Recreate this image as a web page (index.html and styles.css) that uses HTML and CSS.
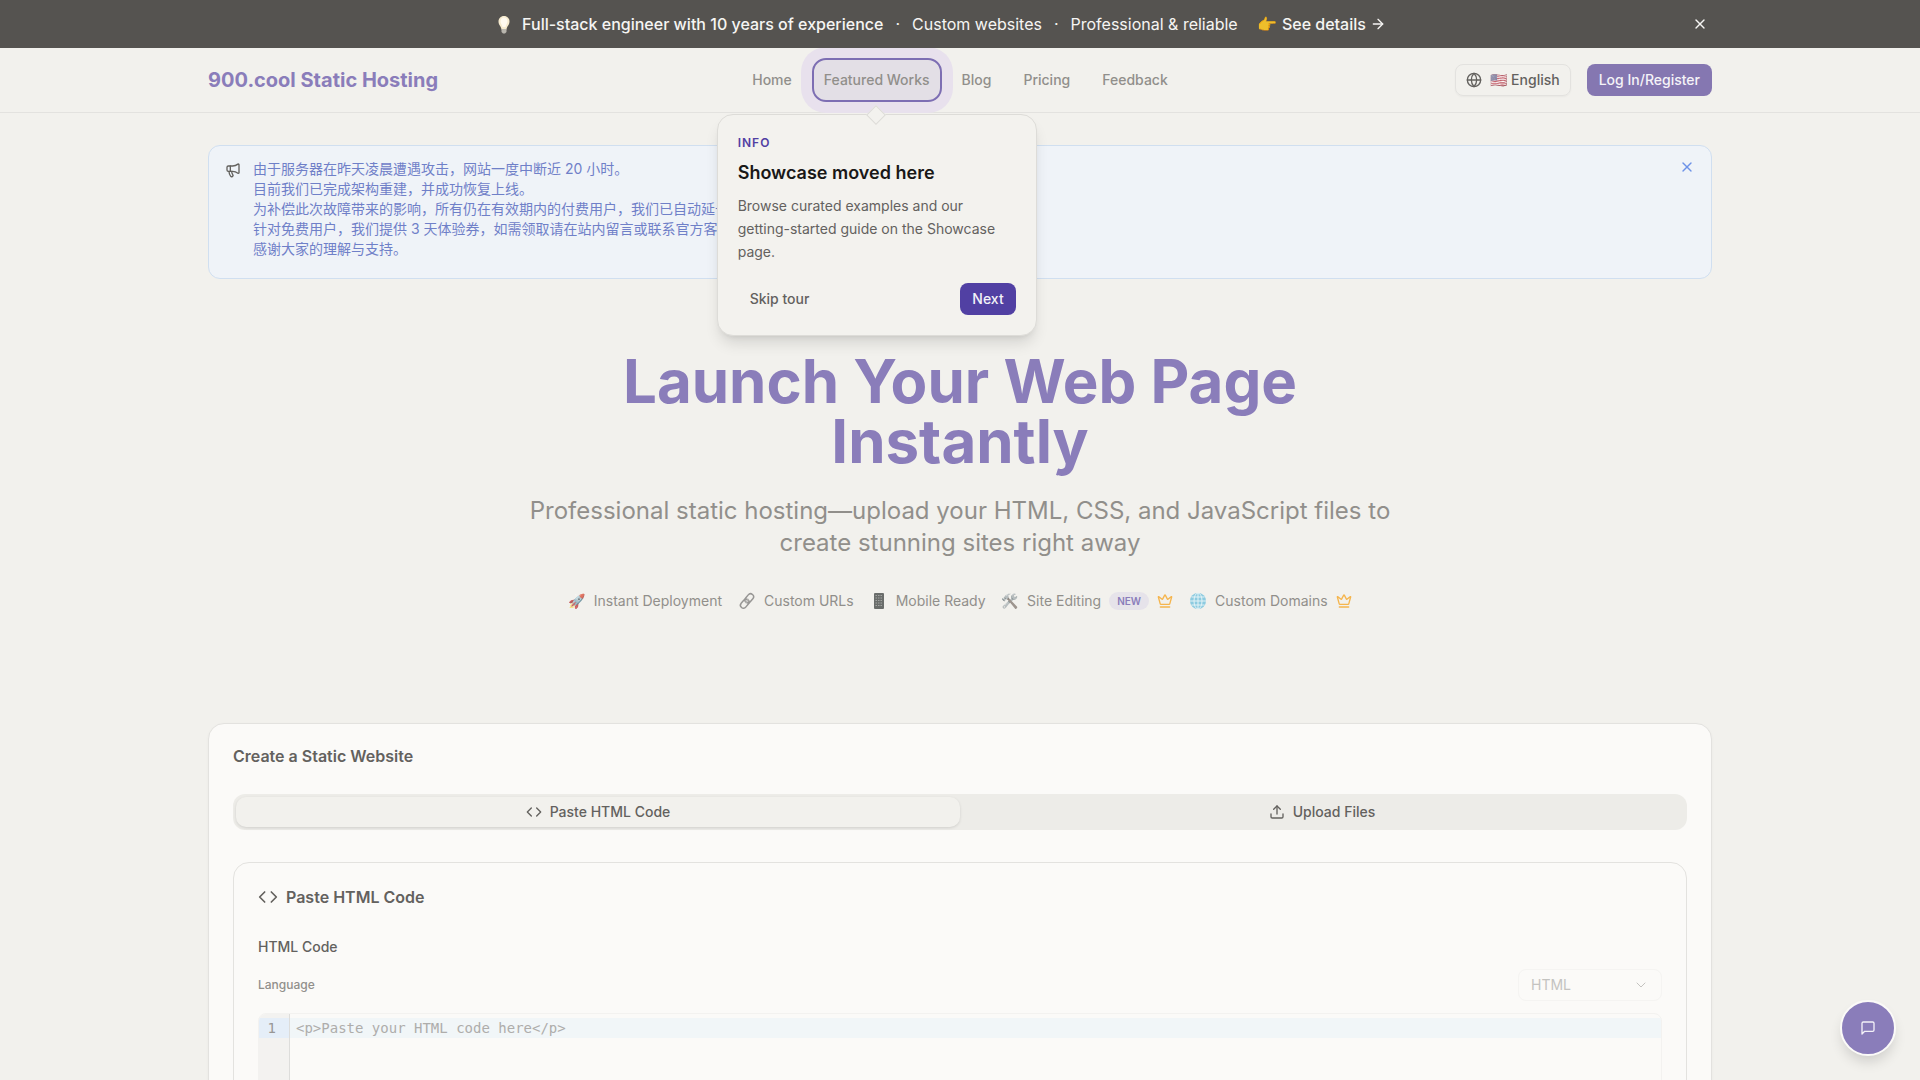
FILE: index.html
```html
<!DOCTYPE html>
<html lang="en">
<head>
  <meta charset="UTF-8" />
  <meta name="viewport" content="width=device-width, initial-scale=1.0" />
  <title>900.cool Static Hosting</title>
  <link rel="stylesheet" href="styles.css">
</head>
<body>
  <!-- Promo bar -->
  <div class="promo">
    <div class="container promo-inner">
      <p class="promo-text">
        <svg class="bulb" viewBox="0 0 20 24">
          <path d="M10 4c3.400 0 5.500 2.500 5.500 5.500 0 3.500-2.500 4.500-3 8h-5c-.500-3.500-3-4.500-3-8C4.500 6.500 6.600 4 10 4z" fill="#f6ebcf"/>
          <path d="M10 5.500c2 0 3.500 1.700 3.500 3.800 0 2.200-1.500 3.200-2 5.700h-3c-.500-2.500-2-3.500-2-5.700 0-2.100 1.500-3.800 3.500-3.800z" fill="#fffaf0"/>
          <path d="M7.500 17h5v3l-1.500 1.500H9L7.500 20z" fill="#b9b6ae"/>
        </svg>
        <strong>Full-stack engineer with 10 years of experience</strong>
        <span>·</span>
        <span>Custom websites</span>
        <span>·</span>
        <span>Professional &amp; reliable</span>
        <a class="promo-link" href="#"><span><span class="hand">👉</span> See details</span>
          <svg class="icon-sm" viewBox="0 0 24 24"><path d="M5 12h14"/><path d="m12 5 7 7-7 7"/></svg>
        </a>
      </p>
      <button class="promo-close" aria-label="Close">
        <svg class="icon" viewBox="0 0 24 24"><path d="M18 6 6 18"/><path d="m6 6 12 12"/></svg>
      </button>
    </div>
  </div>

  <!-- Header -->
  <header class="header">
    <div class="container header-inner">
      <a class="logo" href="#">900.cool Static Hosting</a>
      <nav class="nav">
        <a href="#">Home</a>
        <div class="nav-target">
          <a href="#">Featured Works</a>
          <div class="tour" role="dialog" aria-labelledby="tourTitle">
            <div class="tour-label">INFO</div>
            <h2 id="tourTitle">Showcase moved here</h2>
            <p>Browse curated examples and our getting-started guide on the Showcase page.</p>
            <div class="tour-actions">
              <button class="btn btn-ghost">Skip tour</button>
              <button class="btn btn-solid">Next</button>
            </div>
          </div>
        </div>
        <a href="#">Blog</a>
        <a href="#">Pricing</a>
        <a href="#">Feedback</a>
      </nav>
      <div class="header-actions">
        <button class="btn btn-outline">
          <svg class="icon" viewBox="0 0 24 24"><circle cx="12" cy="12" r="10"/><path d="M12 2a14.5 14.5 0 0 0 0 20 14.5 14.5 0 0 0 0-20"/><path d="M2 12h20"/></svg>
          <span><span class="faded">🇺🇸</span> English</span>
        </button>
        <button class="btn btn-primary">Log In/Register</button>
      </div>
    </div>
  </header>

  <main class="container">
    <!-- Notice -->
    <section class="notice" lang="zh-CN">
      <svg class="icon" viewBox="0 0 24 24"><path d="M11 6a13 13 0 0 0 8.400-2.800A1 1 0 0 1 21 4v12a1 1 0 0 1-1.600.8A13 13 0 0 0 11 14H5a2 2 0 0 1-2-2V8a2 2 0 0 1 2-2z"/><path d="M6 14a12 12 0 0 0 2.400 7.200 2 2 0 0 0 3.200-2.400A8 8 0 0 1 10 14"/><path d="M8 6v8"/></svg>
      <div class="notice-text">
        由于服务器在昨天凌晨遭遇攻击，网站一度中断近 20 小时。<br>
        目前我们已完成架构重建，并成功恢复上线。<br>
        为补偿此次故障带来的影响，所有仍在有效期内的付费用户，我们已自动延长服务时间。<br>
        针对免费用户，我们提供 3 天体验券，如需领取请在站内留言或联系官方客服。<br>
        感谢大家的理解与支持。
      </div>
      <button class="notice-close" aria-label="关闭">
        <svg class="icon" viewBox="0 0 24 24"><path d="M18 6 6 18"/><path d="m6 6 12 12"/></svg>
      </button>
    </section>

    <!-- Hero -->
    <section class="hero">
      <h1>Launch Your Web Page Instantly</h1>
      <p>Professional static hosting—upload your HTML, CSS, and JavaScript files to create stunning sites right away</p>
      <ul class="features">
        <li><span class="faded">🚀</span> Instant Deployment</li>
        <li>
          <svg class="pic" viewBox="0 0 18 18" fill="none">
            <g transform="rotate(-50 9 9)" stroke="#979694" stroke-width="1.500">
              <rect x="0.500" y="6" width="10" height="6" rx="3"/>
              <rect x="7.500" y="6" width="10" height="6" rx="3"/>
              <path d="M6.500 9h5" stroke="#b9b8b6"/>
            </g>
          </svg>
          Custom URLs
        </li>
        <li>
          <svg class="pic" viewBox="0 0 18 18">
            <rect x="4" y="1" width="10" height="16" rx="1" fill="#6a6d6b"/>
            <path d="M5.500 3.500h7M5.500 6h7M5.500 8.500h7M5.500 11h7M5.500 13.500h7" stroke="#a3a5a3" stroke-dasharray="1.500 1"/>
          </svg>
          Mobile Ready
        </li>
        <li><span class="faded gray">🛠️</span> Site Editing <span class="badge">NEW</span>
          <svg class="icon crown" viewBox="0 0 24 24"><path d="M11.562 3.266a.5.5 0 0 1 .876 0L15.390 8.870a1 1 0 0 0 1.516.294L21.183 5.500a.5.5 0 0 1 .798.519l-2.834 10.246a1 1 0 0 1-.956.734H5.810a1 1 0 0 1-.957-.734L2.020 6.020a.5.5 0 0 1 .798-.519l4.276 3.664a1 1 0 0 0 1.516-.294z"/><path d="M5 21h14"/></svg>
        </li>
        <li>
          <svg class="pic" viewBox="0 0 18 18">
            <circle cx="9" cy="9" r="8" fill="#8ccbe0"/>
            <g fill="none" stroke="#e4f3f6">
              <ellipse cx="9" cy="9" rx="4" ry="8"/>
              <path d="M9 1v16M1 9h16M2.500 5h13M2.500 13h13"/>
            </g>
          </svg>
          Custom Domains
          <svg class="icon crown" viewBox="0 0 24 24"><path d="M11.562 3.266a.5.5 0 0 1 .876 0L15.390 8.870a1 1 0 0 0 1.516.294L21.183 5.500a.5.5 0 0 1 .798.519l-2.834 10.246a1 1 0 0 1-.956.734H5.810a1 1 0 0 1-.957-.734L2.020 6.020a.5.5 0 0 1 .798-.519l4.276 3.664a1 1 0 0 0 1.516-.294z"/><path d="M5 21h14"/></svg>
        </li>
      </ul>
    </section>

    <!-- Create site -->
    <section class="card">
      <h2 class="card-title">Create a Static Website</h2>
      <div class="tabs" role="tablist">
        <button class="tab active" role="tab" aria-selected="true">
          <svg class="icon" viewBox="0 0 24 24"><path d="m16 18 6-6-6-6"/><path d="m8 6-6 6 6 6"/></svg>
          Paste HTML Code
        </button>
        <button class="tab" role="tab" aria-selected="false">
          <svg class="icon" viewBox="0 0 24 24"><path d="M21 15v4a2 2 0 0 1-2 2H5a2 2 0 0 1-2-2v-4"/><path d="m17 8-5-5-5 5"/><path d="M12 3v12"/></svg>
          Upload Files
        </button>
      </div>

      <div class="card card-inner">
        <h3 class="card-title">
          <svg class="icon-lg" viewBox="0 0 24 24"><path d="m16 18 6-6-6-6"/><path d="m8 6-6 6 6 6"/></svg>
          Paste HTML Code
        </h3>
        <label class="field-label" for="code">HTML Code</label>
        <div class="lang-row">
          <label for="lang">Language</label>
          <div class="select">
            <select id="lang" disabled>
              <option>HTML</option>
              <option>CSS</option>
              <option>JavaScript</option>
            </select>
            <svg class="icon" viewBox="0 0 24 24"><path d="m6 9 6 6 6-6"/></svg>
          </div>
        </div>
        <div class="editor">
          <div class="gutter"><div>1</div></div>
          <textarea id="code" placeholder="&lt;p&gt;Paste your HTML code here&lt;/p&gt;"></textarea>
        </div>
      </div>
    </section>
  </main>

  <button class="chat" aria-label="Chat">
    <svg class="icon" viewBox="0 0 24 24"><path d="M21 15a2 2 0 0 1-2 2H7l-4 4V5a2 2 0 0 1 2-2h14a2 2 0 0 1 2 2z"/></svg>
  </button>
</body>
</html>
```
FILE: styles.css
```css
* {
  box-sizing: border-box;
}

body {
  font-family: Inter, "Noto Sans CJK SC", "Noto Color Emoji", sans-serif;
  font-size: 14px;
  line-height: 20px;
  background-color: #f2f1ed;
  color: #63615e;
  margin: 0;
}

h1, h2, h3, p, ul {
  margin: 0;
  padding: 0;
}

a {
  color: inherit;
  text-decoration: none;
}

button, select, textarea {
  font: inherit;
  color: inherit;
  background: none;
  border: none;
  margin: 0;
  padding: 0;
}

button {
  cursor: pointer;
}

.container {
  max-width: 1536px;
  margin: 0 auto;
  padding: 0 16px;
}

.icon, .icon-sm, .icon-lg {
  width: 16px;
  height: 16px;
  flex-shrink: 0;
  fill: none;
  stroke: currentColor;
  stroke-width: 2;
  stroke-linecap: round;
  stroke-linejoin: round;
}

.icon-lg {
  width: 20px;
  height: 20px;
}

.pic {
  width: 18px;
  height: 18px;
}

.faded {
  opacity: 0.7;
}

.gray {
  filter: grayscale(0.8);
}

/* Promo bar */
.promo {
  position: relative;
  z-index: 2;
  background-color: #555350;
  color: #f6f5f3;
  font-size: 16px;
  line-height: 24px;
}

.promo-inner {
  position: relative;
  display: flex;
  justify-content: center;
  padding: 12px 56px 12px 16px;
}

.promo-text {
  display: flex;
  gap: 12px;
}

.promo-text strong {
  font-weight: 500;
}

.bulb {
  width: 20px;
  height: 24px;
  margin-right: -4px;
}

.hand {
  opacity: 0.9;
}

.promo-link {
  display: flex;
  align-items: center;
  gap: 4px;
  margin-left: 8px;
  font-weight: 500;
}

.promo-close {
  position: absolute;
  right: 20px;
  top: 16px;
  display: flex;
}

/* Header */
.header {
  border-bottom: 1px solid #e3e2df;
}

.header-inner {
  display: grid;
  grid-template-columns: 1fr auto 1fr;
  align-items: center;
  height: 64px;
}

.logo {
  font-size: 20px;
  line-height: 28px;
  font-weight: 700;
  color: #8a7dba;
}

.nav {
  display: flex;
  gap: 32px;
  font-weight: 500;
  color: #918f8b;
}

.nav-target {
  position: relative;
}

/* highlighted nav item of the tour */
.nav-target::before {
  content: "";
  position: absolute;
  inset: -12px;
  border: 2px solid #7d6eb3;
  border-radius: 14px;
  background-color: rgba(120, 100, 180, 0.12);
  box-shadow: 0 0 0 11px #e8e1ed;
}

.nav-target > a {
  position: relative;
}

.tour {
  position: absolute;
  z-index: 3;
  top: 44px;
  left: 50%;
  width: 320px;
  margin-left: -160px;
  padding: 20px;
  border: 1px solid #dddcd8;
  border-radius: 16px;
  background-color: #f3f2ee;
  box-shadow: 0 10px 15px -3px rgba(0, 0, 0, 0.12), 0 4px 6px -4px rgba(0, 0, 0, 0.1);
  color: #63615e;
  font-weight: 400;
}

.tour::before {
  content: "";
  position: absolute;
  top: -7px;
  left: 50%;
  width: 12px;
  height: 12px;
  margin-left: -8px;
  border: 1px solid #dddcd8;
  background-color: #f3f2ee;
  transform: rotate(45deg);
}

.tour-label {
  font-size: 12px;
  line-height: 16px;
  font-weight: 600;
  letter-spacing: 1px;
  color: #5140a3;
}

.tour h2 {
  margin-top: 8px;
  font-size: 18px;
  line-height: 27px;
  font-weight: 600;
  color: #191817;
}

.tour p {
  margin-top: 8px;
  line-height: 23px;
}

.tour-actions {
  display: flex;
  justify-content: space-between;
  margin-top: 20px;
}

.btn {
  display: flex;
  align-items: center;
  gap: 8px;
  height: 32px;
  padding: 0 12px;
  border-radius: 8px;
  font-weight: 500;
}

.btn-solid {
  background-color: #5140a3;
  color: #f3f2f8;
}

.btn-primary {
  background-color: #8577b1;
  color: #f5f3f8;
}

.btn-outline {
  padding: 0 10px;
  border: 1px solid #e3e2df;
  box-shadow: 0 1px 2px rgba(0, 0, 0, 0.04);
}

.header-actions {
  display: flex;
  justify-content: flex-end;
  gap: 16px;
}

/* Notice */
.notice {
  display: flex;
  gap: 12px;
  margin-top: 32px;
  padding: 13px 16px 19px;
  border: 1px solid #d0dff0;
  border-radius: 12px;
  background-color: #eff3f8;
  color: #6f80c8;
}

.notice > .icon {
  margin-top: 3px;
  color: #63615e;
}

.notice-text {
  flex: 1;
}

.notice-close {
  display: flex;
  align-self: flex-start;
  color: #6d92e8;
}

/* Hero */
.hero {
  max-width: 896px;
  margin: 0 auto;
  padding: 72px 0 112px;
  text-align: center;
  color: #918f8b;
}

.hero h1 {
  font-size: 60px;
  line-height: 60px;
  font-weight: 700;
  color: #8a7dba;
}

.hero p {
  margin-top: 24px;
  font-size: 24px;
  line-height: 32px;
}

.features {
  display: flex;
  justify-content: center;
  gap: 16px;
  margin-top: 32px;
  list-style: none;
}

.features li {
  display: flex;
  align-items: center;
  gap: 8px;
}

.badge {
  padding: 0 8px;
  border-radius: 10px;
  background-color: #e6e3ea;
  color: #8a7dba;
  font-size: 10px;
  line-height: 18px;
  font-weight: 600;
}

.crown {
  color: #f5b54d;
}

/* Cards */
.card {
  padding: 24px;
  border: 1px solid #e3e2df;
  border-radius: 16px;
  background-color: #fbfaf8;
  box-shadow: 0 1px 3px rgba(0, 0, 0, 0.04);
}

.card-title {
  display: flex;
  align-items: center;
  gap: 8px;
  margin-bottom: 30px;
  font-size: 16px;
  line-height: 16px;
  font-weight: 600;
}

.tabs {
  display: grid;
  grid-template-columns: 1fr 1fr;
  padding: 3px;
  border-radius: 12px;
  background-color: #edece8;
}

.tab {
  display: flex;
  align-items: center;
  justify-content: center;
  gap: 8px;
  height: 30px;
  border-radius: 10px;
  font-weight: 500;
}

.tab.active {
  background-color: #f2f1ed;
  box-shadow: 0 1px 3px rgba(0, 0, 0, 0.12);
}

.card-inner {
  margin-top: 32px;
  box-shadow: none;
}

.field-label {
  display: block;
  font-weight: 500;
}

.lang-row {
  display: flex;
  align-items: center;
  justify-content: space-between;
  margin: 12px 0;
  font-size: 12px;
  color: #918f8b;
}

.lang-row label {
  font-weight: 500;
}

.select {
  position: relative;
  width: 144px;
  color: #c4c3c0;
}

.select select {
  width: 100%;
  height: 32px;
  padding: 0 12px;
  appearance: none;
  border: 1px solid #f5f4f2;
  border-radius: 8px;
  font-size: 14px;
  opacity: 1;
}

.select .icon {
  position: absolute;
  right: 13px;
  top: 8px;
  stroke-width: 1.5;
}

.editor {
  display: flex;
  height: 400px;
  border: 1px solid #f3f2f0;
  border-radius: 8px;
  overflow: hidden;
  font-family: "DejaVu Sans Mono", monospace;
}

.gutter {
  width: 31px;
  padding-top: 4px;
  border-right: 1px solid #dddddb;
  background-color: #f3f2f0;
  color: #989795;
  text-align: right;
}

.gutter div {
  padding-right: 13px;
  background-color: #e5eef8;
}

/* first line is the active one */
.editor textarea {
  flex: 1;
  padding: 4px 6px;
  resize: none;
  outline: none;
  background: linear-gradient(#f1f6f8, #f1f6f8) 0 4px / 100% 20px no-repeat;
}

.editor textarea::placeholder {
  color: #aeadab;
}

/* Chat button */
.chat {
  position: fixed;
  right: 24px;
  bottom: 24px;
  display: flex;
  align-items: center;
  justify-content: center;
  width: 56px;
  height: 56px;
  border: 2px solid #fbfaf8;
  border-radius: 50%;
  background-color: #8a7dba;
  color: #f3f1f8;
  box-shadow: 0 8px 14px -3px rgba(0, 0, 0, 0.16);
}
```
